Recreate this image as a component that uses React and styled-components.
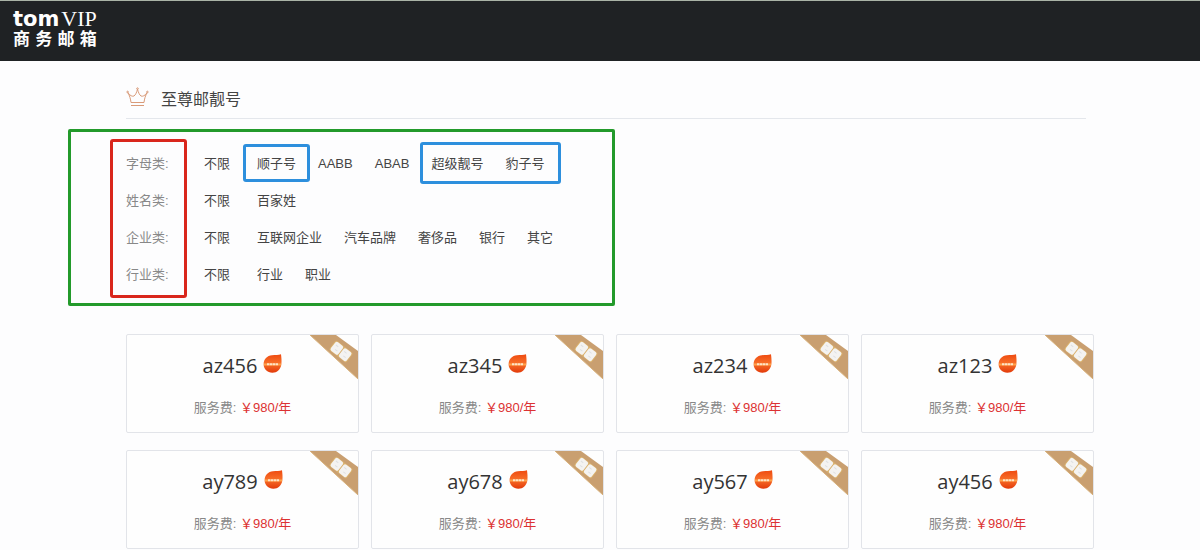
import React from "react";
import styled, { createGlobalStyle } from "styled-components";

const GlobalStyle = createGlobalStyle`
  * {
    box-sizing: border-box;
  }
  body {
    margin: 0;
    background-color: #fdfdfe;
    color: #444;
    font-family: "Liberation Sans", "Noto Sans CJK SC", sans-serif;
    font-size: 13px;
  }
`;

const filtros = [
  {
    label: "字母类:",
    groups: [
      { items: ["顺子号"], marked: true },
      { items: ["AABB", "ABAB"] },
      { items: ["超级靓号", "豹子号"], marked: true, tall: true },
    ],
  },
  { label: "姓名类:", groups: [{ items: ["百家姓"] }] },
  {
    label: "企业类:",
    groups: [{ items: ["互联网企业", "汽车品牌", "奢侈品", "银行", "其它"] }],
  },
  { label: "行业类:", groups: [{ items: ["行业", "职业"] }] },
];

const cuentas = [
  "az456",
  "az345",
  "az234",
  "az123",
  "ay789",
  "ay678",
  "ay567",
  "ay456",
];

const Crown = () => (
  <svg width="23" height="21" viewBox="0 0 23 21" fill="none" stroke="#d99a78">
    <path d="M5 15.5C4.6 12 3.6 8.6 2 5.8 4 8.6 6.4 9.8 8 9 9.6 8 10.8 5 11.5 2.2 12.2 5 13.4 8 15 9 16.6 9.8 19 8.6 21 5.8 19.4 8.6 18.4 12 18 15.5Z" />
    <path d="M5 18.5h13" />
    <circle cx="11.5" cy="1.6" r="0.8" />
    <circle cx="1.6" cy="5" r="0.8" />
    <circle cx="21.4" cy="5" r="0.8" />
  </svg>
);

const Drop = () => (
  <svg width="19" height="19" viewBox="0 0 19 19">
    <defs>
      <linearGradient id="drop" x1="0" y1="0" x2="0" y2="1">
        <stop offset="0" stopColor="#ee4a10" />
        <stop offset="0.5" stopColor="#f8702a" />
        <stop offset="1" stopColor="#e23a0a" />
      </linearGradient>
    </defs>
    <path
      d="M18 0.3C18.4 3.6 18.8 7 18.4 10.3 17.6 15.6 14 18.8 9.4 18.8 4.4 18.8 0.6 15 0.6 10.3 0.6 5 4.2 1.6 9 1.2 12.4 1 15.5 1.2 18 0.3Z"
      fill="url(#drop)"
    />
    <path d="M1 10.5h17" stroke="#ffa24a" strokeWidth="2" />
    <path d="M4 10.3h11" stroke="#ffe3c8" strokeWidth="2" strokeDasharray="2.4 0.5" />
  </svg>
);

const Ribbon = () => (
  <RibbonSvg width="48" height="44" viewBox="0 0 48 44">
    <path d="M0 0H26L48 16V44Z" fill="#c99f70" />
    <path d="M0 0L48 44" stroke="#d8b27c" />
    <g transform="translate(31 16.5) rotate(38)">
      <rect x="-11" y="-6" width="22" height="12" rx="2" fill="#d9b06c" />
      <rect x="-10" y="-5.5" width="9.5" height="11" rx="2" fill="#f4f3f1" />
      <rect x="0.5" y="-5.5" width="9.5" height="11" rx="2" fill="#f4f3f1" />
      <path
        d="M-8-2h3M-6 2h3M2.5-2h3M4.5 2h3"
        stroke="#dfe0e2"
        strokeWidth="1"
      />
    </g>
  </RibbonSvg>
);

const App = () => {
  return (
    <>
      <GlobalStyle />
      <Header>
        <Logo href="#">
          <LogoTop>
            <Tom>tom</Tom>
            <Vip>VIP</Vip>
          </LogoTop>
          <LogoBottom>
            <span>商</span>
            <span>务</span>
            <span>邮</span>
            <span>箱</span>
          </LogoBottom>
        </Logo>
      </Header>

      <Main>
        <Title>
          <Crown />
          <h1>至尊邮靓号</h1>
        </Title>

        <Filters>
          <Labels>
            {filtros.map((f) => (
              <Label key={f.label}>{f.label}</Label>
            ))}
          </Labels>
          <Rows>
            {filtros.map((f) => (
              <Row key={f.label}>
                <All href="#">不限</All>
                {f.groups.map((g) => (
                  <Group key={g.items[0]} $marked={g.marked} $tall={g.tall}>
                    {g.items.map((item) => (
                      <Option href="#" key={item}>
                        {item}
                      </Option>
                    ))}
                  </Group>
                ))}
              </Row>
            ))}
          </Rows>
        </Filters>

        <Cards>
          {cuentas.map((c) => (
            <Card key={c}>
              <Ribbon />
              <Name>
                {c}
                <Drop />
              </Name>
              <Fee>
                服务费: <Price>￥980/年</Price>
              </Fee>
            </Card>
          ))}
        </Cards>
      </Main>
    </>
  );
};

const Header = styled.header`
  height: 61px;
  padding: 7px 13px;
  border-top: 1px solid #a9b3a6;
  background-color: #1f2224;
`;

const Logo = styled.a`
  display: inline-block;
  color: #fff;
  text-decoration: none;
`;

const LogoTop = styled.div`
  display: flex;
  align-items: baseline;
  gap: 2px;
  line-height: 22px;
`;

const Tom = styled.span`
  font-family: "DejaVu Sans", sans-serif;
  font-size: 21px;
  font-weight: 700;
`;

const Vip = styled.span`
  font-family: "Liberation Serif", serif;
  font-size: 22px;
`;

const LogoBottom = styled.div`
  display: flex;
  justify-content: space-between;
  font-size: 17px;
  font-weight: 700;
  line-height: 20px;
`;

const Main = styled.main`
  padding: 16px 106px 0 126px;
`;

const Title = styled.div`
  display: flex;
  align-items: center;
  gap: 12px;
  height: 42px;
  margin-right: 8px;
  border-bottom: 1px solid #e4e7ec;

  h1 {
    margin: 0;
    font-size: 16px;
    font-weight: 400;
  }
`;

const Filters = styled.section`
  display: flex;
  gap: 17px;
  width: fit-content;
  min-width: 547px;
  margin: 10px 0 28px -58px;
  padding: 7px 39px 5px;
  border: 3px solid #239a2b;
  border-radius: 2px;
`;

const Labels = styled.div`
  width: 77px;
  padding: 3px 0 2px 13px;
  border: 3px solid #d9261c;
  border-radius: 3px;
`;

const Label = styled.div`
  height: 37px;
  color: #888;
  line-height: 37px;
`;

const Rows = styled.div`
  padding-top: 6px;
`;

const Row = styled.div`
  display: flex;
  gap: 22px;
  height: 37px;
  line-height: 37px;
`;

const Option = styled.a`
  color: #444;
  text-decoration: none;
`;

const All = styled(Option)`
  margin-right: 5px;
`;

const Group = styled.div`
  position: relative;
  display: flex;
  gap: 22px;

  &::after {
    content: "";
    display: ${(props) => (props.$marked ? "block" : "none")};
    position: absolute;
    inset: ${(props) => (props.$tall ? "-3px -17px -2px -11px" : "-1px -14px 0")};
    border: 3px solid #2d8fdd;
    border-radius: 3px;
    pointer-events: none;
  }
`;

const Cards = styled.section`
  display: grid;
  grid-template-columns: repeat(4, 1fr);
  gap: 17px 12px;
`;

const Card = styled.article`
  position: relative;
  height: 99px;
  padding-top: 16px;
  border: 1px solid #e2e4e9;
  border-radius: 2px;
  background-color: #fefefe;
  text-align: center;
`;

const RibbonSvg = styled.svg`
  position: absolute;
  top: 0;
  right: 0;
`;

const Name = styled.h2`
  display: flex;
  justify-content: center;
  gap: 6px;
  margin: 0 0 17px;
  color: #333;
  font-family: "Open Sans", "Noto Sans", sans-serif;
  font-size: 20px;
  font-weight: 400;
  line-height: 30px;

  svg {
    margin-top: 3px;
  }
`;

const Fee = styled.p`
  margin: 0;
  color: #888;
  line-height: 20px;
`;

const Price = styled.span`
  color: #dc3232;
`;

export default App;
